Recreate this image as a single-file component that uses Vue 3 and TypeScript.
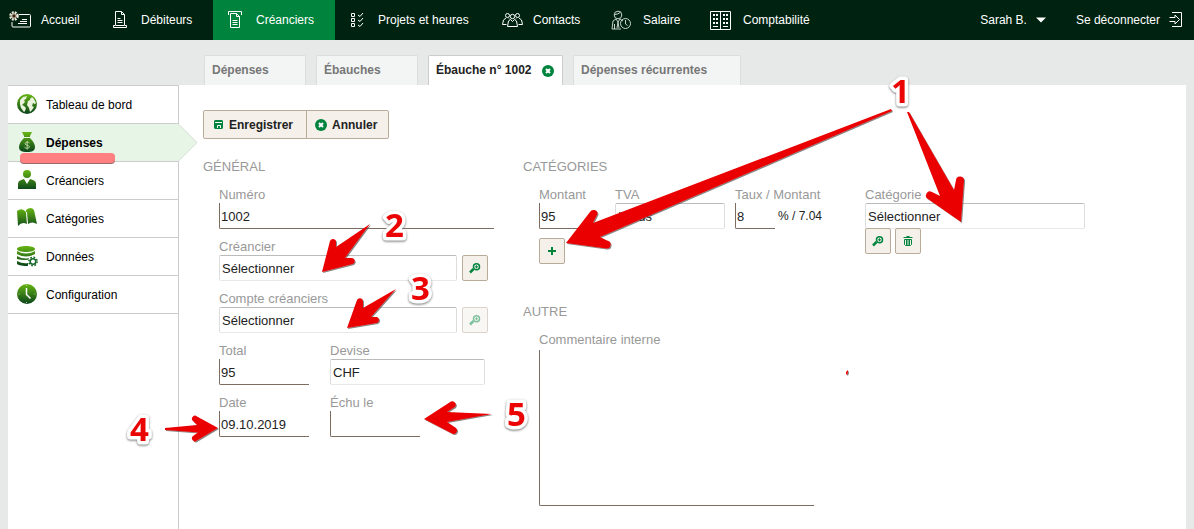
<script setup lang="ts">
import { ref } from 'vue'

interface NavItem { label: string; icon: string; active?: boolean }
const nav: NavItem[] = [
  { label: 'Accueil', icon: 'home' },
  { label: 'Débiteurs', icon: 'debtors' },
  { label: 'Créanciers', icon: 'creditors', active: true },
  { label: 'Projets et heures', icon: 'projects' },
  { label: 'Contacts', icon: 'contacts' },
  { label: 'Salaire', icon: 'salary' },
  { label: 'Comptabilité', icon: 'accounting' },
]
const side: NavItem[] = [
  { label: 'Tableau de bord', icon: 'globe' },
  { label: 'Dépenses', icon: 'bag', active: true },
  { label: 'Créanciers', icon: 'person' },
  { label: 'Catégories', icon: 'book' },
  { label: 'Données', icon: 'data' },
  { label: 'Configuration', icon: 'clock' },
]
const tabs = [
  { label: 'Dépenses', active: false },
  { label: 'Ébauches', active: false },
  { label: 'Ébauche n° 1002', active: true },
  { label: 'Dépenses récurrentes', active: false },
]
const numero = ref('1002')
const total = ref('95')
const date = ref('09.10.2019')
const echu = ref('')
const montant = ref('95')
const taux = ref('8')
const commentaire = ref('')
</script>

<template>
  <div class="page">
    <header class="top">
      <nav class="nav">
        <a v-for="n in nav" :key="n.label" href="#" class="nav-item" :class="[n.icon, { active: n.active }]">
          <svg v-if="n.icon === 'home'" width="22" height="18" viewBox="0 0 22 18" class="line">
            <path d="M10 3.500H20.500q1 0 1 1V15q0 1-1 1H4q-1 0-1-1v-4M13 8.500h5M11 10.500h7M9 12.500h9" />
            <circle cx="5" cy="5" r="3.500" stroke="#f3eee4" stroke-width="2.500" stroke-dasharray="1.800 1" />
            <circle cx="5" cy="5" r="2.200" stroke="#d9cdb8" fill="#3a2412" />
          </svg>
          <svg v-else-if="n.icon === 'debtors'" width="16" height="18" viewBox="0 0 16 18" class="line">
            <path d="M2.500 .5h6l3 3v11h-9zM8.500 .5v3h3M4.500 7.500h3M4.500 9.500h5M4.500 11.500h5M2 14.500H.5v2h13v-2H12" />
          </svg>
          <svg v-else-if="n.icon === 'creditors'" width="16" height="18" viewBox="0 0 16 18" class="line">
            <path d="M.5 4V.5h13V4M2.500 2.500h6l3 3v11h-9v-14zM8.500 2.500v3h3M4.500 9.500h5M4.500 11.500h5M4.500 13.500h5" />
          </svg>
          <svg v-else-if="n.icon === 'projects'" width="16" height="16" viewBox="0 0 16 16" class="line">
            <path d="M1.500 1.500h3v3h-3zM1.500 6.500h3v3h-3zM1.500 11.500h3v3h-3zM8 3l2 1.500L13 1M8 8l2 1.500L13 6M8 13l2 1.500L13 11" />
          </svg>
          <svg v-else-if="n.icon === 'contacts'" width="21" height="16" viewBox="0 0 21 16" class="line">
            <circle cx="5.500" cy="3.500" r="2" /><circle cx="15.500" cy="3.500" r="2" /><circle cx="10.500" cy="4.500" r="2.200" />
            <path d="M4 6L1.500 8 .5 12.500h4M7 6.500l1 1M17 6l2.500 2 1 4.500h-4M14 6.500l-1 1M8.500 7.500L6.500 9l-1 5.500h10L14.500 9l-2-1.500-2 2z" />
          </svg>
          <svg v-else-if="n.icon === 'salary'" width="21" height="20" viewBox="0 0 21 20" class="line soft">
            <circle cx="7" cy="5" r="3.800" /><path d="M3.500 4.500q4 0 6-2.500M5 9L2 11 1 19h9M9 9l3 2M5 9l2 3 2-3M7 12l-1 6M7 12l1 6M3.500 14v5" />
            <circle cx="14.500" cy="13.500" r="5" /><path d="M14.500 10v4l2 1.500" />
          </svg>
          <svg v-else width="21" height="19" viewBox="0 0 21 19" class="line">
            <path d="M.5.5h20v18H.5zM10.500 .5v18M3 15.500h5M13 15.500h5" />
            <path d="M3 4h5M3 8h5M3 12h5M13 4h5M13 8h5M13 12h5" stroke-width="2" stroke-dasharray="2 1" />
          </svg>
          <span>{{ n.label }}</span>
        </a>
      </nav>
      <div class="session">
        <button type="button" class="user">Sarah B.
          <svg width="10" height="6" viewBox="0 0 10 6"><path d="M0 .5h10L5 5.500z" fill="#fff" /></svg>
        </button>
        <a href="#" class="logout">Se déconnecter
          <svg width="14" height="16" viewBox="0 0 14 16" class="line"><path d="M3 .5h9.500v14H3M.5 5.500H6V3l4.500 4.500L6 12V9.500H.5" /></svg>
        </a>
      </div>
    </header>

    <div class="tabs">
      <div v-for="t in tabs" :key="t.label" class="tab" :class="{ current: t.active }">
        <a href="#">{{ t.label }}</a>
        <button v-if="t.active" type="button" class="close" aria-label="Fermer">
          <svg width="12" height="12" viewBox="0 0 12 12"><circle cx="6" cy="6" r="6" fill="#00843d" /><path d="M4 4l4 4M8 4L4 8" stroke="#fff" stroke-width="2" /></svg>
        </button>
      </div>
    </div>

    <div class="body">
      <aside class="side">
        <a v-for="s in side" :key="s.label" href="#" class="side-item" :class="{ active: s.active }">
          <svg width="22" height="22" viewBox="0 0 22 22" class="sicon">
            <defs>
              <linearGradient :id="'g-' + s.icon" x1="0" y1="0" x2="0" y2="22" gradientUnits="userSpaceOnUse">
                <stop offset="0" stop-color="#66b512" /><stop offset="1" stop-color="#00391d" />
              </linearGradient>
            </defs>
            <g :fill="'url(#g-' + s.icon + ')'">
              <template v-if="s.icon === 'globe'">
                <circle cx="10" cy="10" r="10" />
                <path d="M3 6l3-3 4-1-1 3-2 1 1 2-3 3 2 1 2 2-1 3-1 1-3-4-1-4zM13 5l2-2 2 2 2 4-1 1-2-1-1 3 2 1-2 3-2 2-1-4-2-3 1-4 2-1z" fill="#e9f3dc" />
              </template>
              <template v-else-if="s.icon === 'bag'">
                <path d="M5 0h10l-2 4v1H7V4zM7 6h6c3 3 5 6 5 9 0 4-3 5-8 5s-8-1-8-5c0-3 2-6 5-9z" />
                <path d="M12.500 11c-1-1.500-4.500-1-4.500 .8s4.500 1.200 4.500 3-4 2-5 .5M10.200 9v8.500" fill="none" stroke="#b7d59c" />
              </template>
              <template v-else-if="s.icon === 'person'">
                <circle cx="10" cy="4" r="4" />
                <path d="M1 19v-5q0-3 3-4l3-1 3 5 3-5 3 1q3 1 3 4v5z" />
              </template>
              <template v-else-if="s.icon === 'book'">
                <path d="M0 3q5-4 9 1l1 12q-5-3-9 2zM9 2q5-4 8 0l3 14q-5-3-9 0l-1-1z" />
                <path d="M9.500 4l1 12" stroke="#fff" />
              </template>
              <template v-else-if="s.icon === 'data'">
                <path d="M0 3c0-4 18-4 18 0s-18 4-18 0zM0 5q9 5 18 0v3q-9 5-18 0zM0 10q9 5 18 0l-3 3q-8 2-15 0zM0 15q6 3 11 2v3Q3 20 0 18z" />
                <circle cx="16" cy="15.500" r="5.200" fill="#fff" />
                <circle cx="16" cy="15.500" r="2.800" fill="none" stroke="#17682a" stroke-width="1.600" />
                <circle cx="16" cy="15.500" r="4.200" fill="none" stroke="#17682a" stroke-width="1.500" stroke-dasharray="1.650 1.650" />
              </template>
              <template v-else>
                <circle cx="10" cy="10" r="10" />
                <path d="M9.500 4v6.500l4 4" fill="none" stroke="#fff" stroke-width="1.500" />
                <path d="M9.500 1v1M9.500 18v1M1.500 10h1M17.500 10h1" stroke="#b7d59c" />
              </template>
            </g>
          </svg>
          <span>{{ s.label }}</span>
          <svg v-if="s.active" class="notch" width="20" height="39" viewBox="0 0 20 39">
            <path d="M0 .5L19 19.500 0 38.500" fill="#e7f5e7" stroke="#d6ddd6" />
          </svg>
        </a>
      </aside>

      <main class="main">
        <div class="toolbar">
          <button type="button">
            <svg width="9" height="9" viewBox="0 0 9 9"><path d="M1 0h7l1 1v7L8 9H1L0 8V1z" fill="#00843d" /><path d="M1 2.500h7M3.500 8V5.500h3V8" fill="none" stroke="#fff" /></svg>
            Enregistrer
          </button>
          <button type="button">
            <svg width="12" height="12" viewBox="0 0 12 12"><circle cx="6" cy="6" r="6" fill="#00843d" /><path d="M4 4l4 4M8 4L4 8" stroke="#fff" stroke-width="2" /></svg>
            Annuler
          </button>
        </div>

        <form class="form" @submit.prevent>
          <section class="general">
            <h2>GÉNÉRAL</h2>
            <div class="fields">
              <div class="field wide"><label for="numero">Numéro</label><input id="numero" v-model="numero" type="text"></div>
              <div class="with-btn">
                <div class="field"><label for="creancier">Créancier</label><select id="creancier"><option>Sélectionner</option></select></div>
                <button type="button" class="sq" aria-label="Rechercher un créancier">
                  <svg width="12" height="12" viewBox="0 0 12 12" class="glyph"><path d="M1 10.500L4.500 7" stroke-width="2.500" /><circle cx="7.500" cy="4.800" r="3" stroke-width="1.500" /><path d="M7.500 3.300v3M6 4.800h3" /></svg>
                </button>
              </div>
              <div class="with-btn">
                <div class="field"><label for="compte">Compte créanciers</label><select id="compte"><option>Sélectionner</option></select></div>
                <button type="button" class="sq" disabled aria-label="Rechercher un compte">
                  <svg width="12" height="12" viewBox="0 0 12 12" class="glyph"><path d="M1 10.500L4.500 7" stroke-width="2.500" /><circle cx="7.500" cy="4.800" r="3" stroke-width="1.500" /><path d="M7.500 3.300v3M6 4.800h3" /></svg>
                </button>
              </div>
              <div class="pair">
                <div class="field short"><label for="total">Total</label><input id="total" v-model="total" type="text"></div>
                <div class="field currency"><label for="devise">Devise</label><select id="devise"><option>CHF</option></select></div>
              </div>
              <div class="pair">
                <div class="field short"><label for="date">Date</label><input id="date" v-model="date" type="text"></div>
                <div class="field short"><label for="echu">Échu le</label><input id="echu" v-model="echu" type="text"></div>
              </div>
            </div>
          </section>

          <div class="right">
            <section class="categories">
              <h2>CATÉGORIES</h2>
              <div class="cat-row">
                <div class="amount">
                  <div class="field"><label for="montant">Montant</label><input id="montant" v-model="montant" type="text"></div>
                  <button type="button" class="sq" aria-label="Ajouter">
                    <svg width="12" height="12" viewBox="0 0 12 12" class="glyph"><path d="M2 6h8M6 2v8" stroke-width="2" /></svg>
                  </button>
                </div>
                <div class="field"><label for="tva">TVA</label><select id="tva"><option>Inclus</option></select></div>
                <div class="field"><label for="taux">Taux / Montant</label>
                  <div class="rate-line"><input id="taux" v-model="taux" type="text"><span>% / 7.04</span></div>
                </div>
                <div class="category">
                  <div class="field"><label for="categorie">Catégorie</label><select id="categorie"><option>Sélectionner</option></select></div>
                  <div class="actions">
                    <button type="button" class="sq" aria-label="Rechercher une catégorie">
                      <svg width="12" height="12" viewBox="0 0 12 12" class="glyph"><path d="M1 10.500L4.500 7" stroke-width="2.500" /><circle cx="7.500" cy="4.800" r="3" stroke-width="1.500" /><path d="M7.500 3.300v3M6 4.800h3" /></svg>
                    </button>
                    <button type="button" class="sq" aria-label="Supprimer">
                      <svg width="12" height="12" viewBox="0 0 12 12" class="glyph"><path d="M1.500 2.500h9M4.500 1.500h3M2.500 4.500h7v5l-1 1h-5l-1-1zM4.500 5v5M6 5v5M7.500 5v5" /></svg>
                    </button>
                  </div>
                </div>
              </div>
            </section>
            <section>
              <h2>AUTRE</h2>
              <div class="field comment"><label for="commentaire">Commentaire interne</label><textarea id="commentaire" v-model="commentaire"></textarea></div>
            </section>
          </div>
        </form>
      </main>
    </div>

    <svg class="notes" width="1194" height="529" viewBox="0 0 1194 529" aria-hidden="true">
      <defs>
        <filter id="drop" x="-10%" y="-10%" width="120%" height="120%"><feDropShadow dx="1" dy="1" stdDeviation="0.6" flood-color="#333" flood-opacity="0.6" /></filter>
      </defs>
      <rect x="20" y="154" width="95" height="10" rx="4" fill="#9a6a6a" />
      <rect x="20" y="153" width="95" height="10" rx="4" fill="#ff8080" />
      <g fill="#ea0404" filter="url(#drop)">
        <path d="M891 109l1 2L600 237l7 3.500A4 4 0 0 1 606 248.500L566 243 590 212A4 4 0 0 1 597.500 214L593 223z" />
        <path d="M907 112h2l45 78 2-10A4 4 0 0 1 964 181L961 222 928 199A4 4 0 0 1 932 192L940 196z" />
        <path d="M370 224L345 258h7A3.200 3.200 0 0 1 353 264L322 272 330 241A3.200 3.200 0 0 1 336 241V247z" />
        <path d="M396 289L371 317h6A3.200 3.200 0 0 1 377 323L347 328 357 300A3.200 3.200 0 0 1 363 301V308z" />
        <path d="M165 428L197 425l-4-4A3 3 0 0 1 197 416.500L218 428 197 440.500A3 3 0 0 1 193 436L198 432.500 165 430z" />
        <path d="M492 414l-45 8 9 6A3.500 3.500 0 0 1 453 434L424 419 451 401.500A3.500 3.500 0 0 1 455 407L447 412z" />
        <path d="M848 370v2l-1 3-1-1v-2z" />
      </g>
      <g class="digits">
        <text x="891" y="103">1</text>
        <text x="385" y="237">2</text>
        <text x="411" y="300">3</text>
        <text x="130" y="441">4</text>
        <text x="507" y="426">5</text>
      </g>
    </svg>
  </div>
</template>

<style>
body { margin: 0; background: #e7e9e8; }
</style>

<style scoped>
.page { position: relative; min-height: 100vh; display: flex; flex-direction: column; overflow: hidden; font: 12px/16px "Liberation Sans", Arial, sans-serif; color: #222; background: #e7e9e8; }
.page *, .page *::before { box-sizing: border-box; }
a { color: inherit; text-decoration: none; }
button, input, select, textarea { font: inherit; color: inherit; margin: 0; border-radius: 0; }
svg { display: block; flex: none; }
.line { fill: none; stroke: #fff; }
.soft { stroke: #c9d3cd; }

.top { display: flex; justify-content: space-between; height: 40px; background: #002311; color: #fff; }
.nav { display: grid; grid-template-columns: 98px 115px 122px 152px 109px 100px 134px; }
.nav-item { display: flex; align-items: center; gap: 12px; padding-left: 15px; white-space: nowrap; }
.nav-item.home { padding-left: 9px; gap: 10px; }
.nav-item.contacts { gap: 10px; }
.nav-item.salary { gap: 11px; }
.nav-item.accounting { padding-left: 14px; }
.nav-item.active { background: #00843d; }
.session { display: flex; align-items: center; gap: 30px; padding-right: 11px; white-space: nowrap; }
.user, .logout { display: flex; align-items: center; gap: 9px; padding: 0; border: 0; background: none; }

.tabs { display: flex; gap: 10px; padding: 15px 8px 0 204px; }
.tab { display: flex; justify-content: space-between; min-width: 102px; height: 30px; padding: 6px 8px 0 7px; border: 1px solid #dcdedd; border-bottom: 0; border-radius: 2px 2px 0 0; background: #f3f5f4; color: #777; font-weight: bold; white-space: nowrap; }
.tab:last-child { min-width: 168px; }
.tab.current { min-width: 135px; background: #fff; border-color: #ccc; color: #222; }
.close { display: flex; padding: 3px 0 0; height: 15px; border: 0; background: none; }

.body { flex: 1; display: flex; margin: 0 8px; background: #fff; }
.side { flex: none; width: 171px; border-right: 1px solid #ccc; color: #000; }
.side-item { position: relative; display: flex; align-items: center; gap: 7px; height: 38px; padding-left: 9px; border-top: 1px solid #ccc; }
.side-item:last-child { height: 39px; border-bottom: 1px solid #ccc; }
.side-item.active { background: #e7f5e7; font-weight: bold; }
.notch { position: absolute; left: 170px; top: -1px; }

.main { flex: 1; min-width: 0; padding: 25px 0 23px 24px; }
.toolbar { display: flex; }
.toolbar button { display: flex; align-items: center; gap: 5px; height: 29px; padding: 0 11px 0 8px; border: 1px solid #b9ab9a; border-radius: 2px 0 0 2px; background: #f5f0ea; font-weight: bold; }
.toolbar button:first-child { gap: 6px; padding: 0 13px 0 10px; }
.toolbar button + button { margin-left: -1px; border-radius: 0 2px 2px 0; }

.form { display: grid; grid-template-columns: 320px 1fr; margin-top: 19px; font-size: 13px; line-height: 17px; }
h2 { margin: 0 0 11px; font-size: 13px; line-height: 17px; font-weight: normal; color: #999; }
.fields { display: flex; flex-direction: column; gap: 9px; padding-left: 16px; }
.field { display: flex; flex-direction: column; }
.field label { color: #999; white-space: nowrap; }
.field input, .field textarea { width: 100%; height: 26px; padding: 1px 1px 0; border: 0; border-left: 1px solid #7d6c60; border-bottom: 1px solid #7d6c60; border-bottom-left-radius: 2px; background: #fff; outline: 0; }
.field select { appearance: none; width: 100%; height: 26px; padding: 0 2px; border: 1px solid #ddd; border-top-color: #bbb; border-bottom-color: #e8e8e8; border-radius: 2px; background: #fff; }
.wide, .comment { width: 275px; }
.with-btn { display: flex; align-items: flex-end; gap: 5px; }
.with-btn .field { width: 238px; }
.pair { display: flex; gap: 21px; }
.short { width: 90px; }
.currency { width: 155px; }
.sq { display: flex; align-items: center; justify-content: center; width: 26px; height: 26px; padding: 0; border: 1px solid #b9ab9a; border-radius: 2px; background: #f5f0ea; }
.sq:disabled { opacity: 0.5; }
.glyph { fill: none; stroke: #00843d; }

.categories { min-height: 145px; }
.cat-row { display: grid; grid-template-columns: 66px 110px 120px 220px; column-gap: 10px; align-items: start; padding-left: 16px; }
.rate-line { display: flex; align-items: center; gap: 3px; font-size: 12px; white-space: nowrap; }
.rate-line input { width: 40px; font-size: 13px; }
.amount { display: flex; flex-direction: column; gap: 9px; }
.actions { display: flex; gap: 4px; margin-top: -1px; }
.comment { margin-left: 16px; gap: 2px; }
.field textarea { height: 156px; resize: none; }

.notes { position: absolute; left: 0; top: 0; pointer-events: none; }
.digits { font: bold 33px "Open Sans", sans-serif; fill: #ea0404; stroke: #fff; stroke-width: 7px; stroke-linejoin: round; paint-order: stroke; filter: drop-shadow(0 1px 1px #777); }
</style>
